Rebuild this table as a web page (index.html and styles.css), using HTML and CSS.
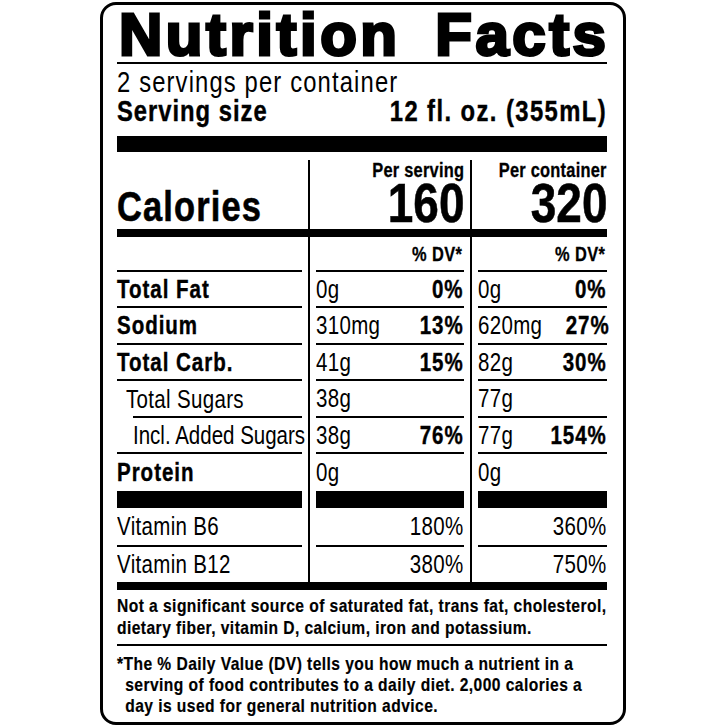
FILE: index.html
```html
<!DOCTYPE html>
<html lang="en">
<head>
<meta charset="utf-8">
<title>Nutrition Facts</title>
<link rel="stylesheet" href="styles.css">
</head>
<body>
<div class="label">
  <div class="title"><span>Nutrition</span><span class="last">Facts</span></div>
  <div class="title-rule"></div>
  <div class="servings"><span class="n">2 servings per container</span></div>
  <div class="size"><span class="n">Serving size</span><span class="n r amount">12 fl. oz. (355mL)</span></div>
  <div class="bar-top"></div>
  <div class="grid">
    <div class="cal-label c1"><span class="n">Calories</span></div>
    <div class="cal c2"><span class="n r per">Per serving</span><span class="n r kcal">160</span></div>
    <div class="cal c3"><span class="n r per">Per container</span><span class="n r kcal">320</span></div>
    <div class="bar-mid"></div>

    <div class="cell c1"></div>
    <div class="cell c2 dvh"><span class="n r">% DV*</span></div>
    <div class="cell c3 dvh"><span class="n r">% DV*</span></div>

    <div class="cell c1"><span class="n b">Total Fat</span></div>
    <div class="cell c2"><span class="n">0g</span><span class="n r b">0%</span></div>
    <div class="cell c3"><span class="n">0g</span><span class="n r b">0%</span></div>

    <div class="cell c1"><span class="n b">Sodium</span></div>
    <div class="cell c2"><span class="n">310mg</span><span class="n r b">13%</span></div>
    <div class="cell c3"><span class="n">620mg</span><span class="n r b">27%</span></div>

    <div class="cell c1"><span class="n b">Total Carb.</span></div>
    <div class="cell c2"><span class="n">41g</span><span class="n r b">15%</span></div>
    <div class="cell c3"><span class="n">82g</span><span class="n r b">30%</span></div>

    <div class="cell c1 ind1 rule-indent"><span class="n">Total Sugars</span></div>
    <div class="cell c2"><span class="n">38g</span></div>
    <div class="cell c3"><span class="n">77g</span></div>

    <div class="cell c1 ind2"><span class="n">Incl. Added Sugars</span></div>
    <div class="cell c2"><span class="n">38g</span><span class="n r b">76%</span></div>
    <div class="cell c3"><span class="n">77g</span><span class="n r b">154%</span></div>

    <div class="cell c1 nl"><span class="n b">Protein</span></div>
    <div class="cell c2 nl"><span class="n">0g</span></div>
    <div class="cell c3 nl"><span class="n">0g</span></div>

    <div class="cell c1 blk"></div>
    <div class="cell c2 blk"></div>
    <div class="cell c3 blk"></div>

    <div class="cell c1"><span class="n">Vitamin B6</span></div>
    <div class="cell c2 end"><span class="n r">180%</span></div>
    <div class="cell c3 end"><span class="n r">360%</span></div>

    <div class="cell c1 nl"><span class="n">Vitamin B12</span></div>
    <div class="cell c2 end nl"><span class="n r">380%</span></div>
    <div class="cell c3 end nl"><span class="n r">750%</span></div>
  </div>
  <div class="bar-bottom"></div>
  <p class="note"><span class="n">Not a significant source of saturated fat, trans fat, cholesterol,<br>dietary fiber, vitamin D, calcium, iron and potassium.</span></p>
  <div class="note-rule"></div>
  <p class="note2"><span class="n hang">*The % Daily Value (DV) tells you how much a nutrient in a<br>serving of food contributes to a daily diet. 2,000 calories a<br>day is used for general nutrition advice.</span></p>
</div>
</body>
</html>
```

FILE: styles.css
```css
* { box-sizing: border-box; }

body {
  margin: 0;
  background: #fff;
  color: #000;
}

.label {
  width: 526px;
  height: 723px;
  margin: 2px 0 0 100px;
  border: 3px solid #000;
  border-radius: 16px;
  padding: 0 16px 0 14px;
  font-family: "Liberation Sans", Arial, sans-serif;
}

/* condensed text: Liberation Sans narrowed like Arial Narrow */
.n {
  display: inline-block;
  white-space: nowrap;
  transform: scaleX(0.82);
  transform-origin: 0 50%;
}

.n.r { transform-origin: 100% 50%; }

.title {
  display: flex;
  justify-content: space-between;
  margin: -4px 0 -6px;
  font-weight: 700;
  font-size: 60px;
  line-height: 67px;
  letter-spacing: 3.5px;
  -webkit-text-stroke: 3px #000;
  padding-left: 2px;
}

.title .last { margin-right: -2.5px; }

.title-rule {
  height: 2px;
  background: #000;
}

.servings {
  margin-top: 4px;
  font-size: 29px;
  line-height: 29px;
  letter-spacing: 1.4px;
}

.size {
  display: flex;
  justify-content: space-between;
  font-weight: 700;
  font-size: 29px;
  line-height: 29px;
  letter-spacing: 1.2px;
  -webkit-text-stroke: 0.4px #000;
}

.size .amount { letter-spacing: 1.75px; }

.bar-top {
  height: 16px;
  margin-top: 10px;
  background: #000;
}

.grid {
  margin-top: 8px;
  display: grid;
  grid-template-columns: 185px 14px 148px 14px 129px;
  grid-template-rows: 69px 8px 35px 36px 37px 36px 37px 36px 37px 17px 39px 35px;
  background:
    linear-gradient(#000, #000) 191px 0 / 2px 100% no-repeat,
    linear-gradient(#000, #000) 353px 0 / 2px 100% no-repeat;
}

.c1 { grid-column: 1; }
.c2 { grid-column: 3; }
.c3 { grid-column: 5; }

.cal-label {
  align-self: end;
  font-weight: 700;
  font-size: 42px;
  line-height: 42px;
  letter-spacing: 1.4px;
  padding-bottom: 1px;
  -webkit-text-stroke: 0.6px #000;
}

.cal {
  display: flex;
  flex-direction: column;
  align-items: flex-end;
  justify-content: flex-end;
  padding-bottom: 3px;
  font-weight: 700;
}

.per {
  font-size: 20px;
  line-height: 20px;
  letter-spacing: 0.3px;
  -webkit-text-stroke: 0.3px #000;
}

.kcal {
  font-size: 56px;
  line-height: 46px;
  -webkit-text-stroke: 0.6px #000;
}

.bar-mid {
  grid-column: 1 / -1;
  background: #000;
}

.cell {
  display: flex;
  align-items: center;
  justify-content: space-between;
  border-bottom: 2px solid #000;
  font-size: 25px;
  line-height: 1;
  letter-spacing: 0.4px;
}

.b {
  font-weight: 700;
  letter-spacing: 1.2px;
  -webkit-text-stroke: 0.4px #000;
}

.dvh {
  justify-content: flex-end;
  padding-right: 2px;
  font-weight: 700;
  font-size: 20px;
  letter-spacing: 0.5px;
  -webkit-text-stroke: 0.3px #000;
}

.end { justify-content: flex-end; }

.ind1 { padding-left: 9px; }
.ind2 { padding-left: 16px; letter-spacing: 0; }

.rule-indent {
  border-bottom: none;
  background: linear-gradient(#000, #000) 16px 100% / calc(100% - 16px) 2px no-repeat;
}

.nl { border-bottom: none; }

.blk {
  background: #000;
  border-bottom: none;
}

.bar-bottom {
  height: 8px;
  background: #000;
}

.note {
  margin: 5px 0 0;
  font-weight: 700;
  font-size: 19px;
  line-height: 22px;
  letter-spacing: 0.55px;
  -webkit-text-stroke: 0.2px #000;
}

.note-rule {
  height: 2px;
  margin-top: 5px;
  background: #000;
}

.note2 {
  margin: 7px 0 0;
  font-weight: 700;
  font-size: 19px;
  line-height: 21px;
  letter-spacing: 0.55px;
  -webkit-text-stroke: 0.2px #000;
}

.hang {
  padding-left: 10px;
  text-indent: -10px;
}
```
